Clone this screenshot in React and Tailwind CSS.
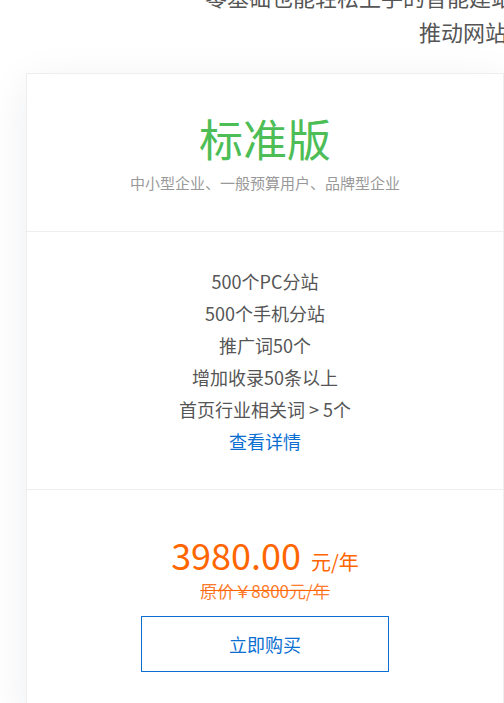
export default function App() {
    return (
        <div
            className="min-h-[703px] overflow-hidden bg-white text-[#555]"
            style={{ fontFamily: '"Noto Sans CJK SC", "Noto Sans", sans-serif' }}
        >
            <div className="-mt-[21px] whitespace-nowrap text-[22px] leading-[35px] text-[#555]">
                <p className="pl-[205px]">零基础也能轻松上手的智能建站系统，帮助企业快速</p>
                <p className="pl-[419px]">推动网站营销推广</p>
            </div>

            <div className="ml-[26px] mt-[24px] w-[478px] border border-[#eeeeee] bg-white shadow-[0_10px_40px_rgba(30,40,80,0.08)]">
                <div className="pt-[36px] pb-[37px] text-center">
                    <h2 className="text-[44px] leading-[56px] text-[#4dbd56]">标准版</h2>
                    <p className="mt-[6px] text-[15px] leading-[22px] text-[#999]">
                        中小型企业、一般预算用户、品牌型企业
                    </p>
                </div>

                <ul className="border-t border-[#eeeeee] pt-[33px] pb-[32px] text-center text-[18px] leading-[32px] text-[#555]">
                    <li>500个PC分站</li>
                    <li>500个手机分站</li>
                    <li>推广词50个</li>
                    <li>增加收录50条以上</li>
                    <li>首页行业相关词 &gt; 5个</li>
                    <li>
                        <a href="#" className="text-[#0b6fd1]">查看详情</a>
                    </li>
                </ul>

                <div className="border-t border-[#eeeeee] pt-[42px] pb-[40px] text-center">
                    <div className="text-[36px] leading-[44px] text-[#ff6600]">
                        3980.00
                        <span className="ml-[10px] text-[20px] leading-none">元/年</span>
                    </div>
                    <div className="mt-[3px] text-[17px] leading-[24px] text-[#ff7a2a] line-through decoration-[#ff6600]">
                        原价￥8800元/年
                    </div>
                    <button className="mx-auto mt-[13px] flex h-[56px] w-[248px] items-center justify-center border border-[#0b6fd1] text-[18px] text-[#0b6fd1]">
                        立即购买
                    </button>
                </div>
            </div>
        </div>
    );
}
